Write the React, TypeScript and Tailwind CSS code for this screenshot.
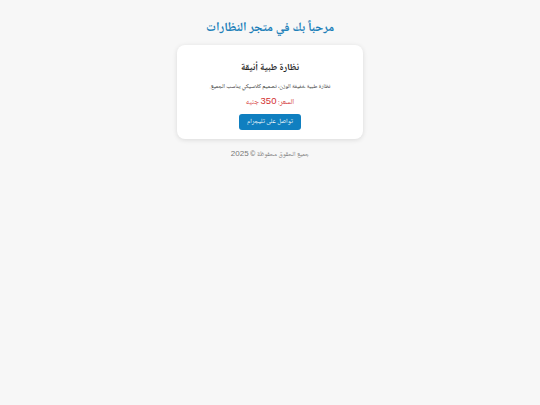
const latin = { fontFamily: '"Liberation Sans", Arial, sans-serif' };

export default function App() {
  return (
    <div
      dir="rtl"
      className="min-h-[405px] bg-[#f7f7f7] px-5 pt-[19px] text-center text-[#333]"
      style={{ fontFamily: '"Noto Naskh Arabic", "Liberation Sans", Arial, sans-serif' }}
    >
      <h1 className="text-[12.5px] font-bold leading-[20px] text-[#2180b9]">مرحباً بك في متجر النظارات</h1>

      <div className="mx-auto mt-[6px] w-[186px] rounded-lg bg-white px-3 pt-[15px] pb-[9px] shadow-[0_1px_5px_rgba(0,0,0,0.12)]">
        <h2 className="text-[9.5px] font-bold leading-[16px] text-[#222]">نظارة طبية أنيقة</h2>
        <p className="mt-[6px] text-[6px] leading-[10px] text-[#333]">
          نظارة طبية خفيفة الوزن، تصميم كلاسيكي يناسب الجميع.
        </p>
        <p className="mt-[3px] text-[7.5px] leading-[12px] text-[#d32f2f]">
          السعر: <span className="text-[9.5px]" style={latin}>350</span> جنيه
        </p>
        <div className="mt-[5px] flex justify-center">
          <a
            href="#"
            className="block w-[62px] rounded-[3px] bg-[#0f7fc0] py-[3px] text-[6.5px] leading-[10px] text-white"
          >
            تواصل على تليجرام
          </a>
        </div>
      </div>

      <footer className="mt-[9px] text-[6.5px] leading-[12px] text-[#777]">
        جميع الحقوق محفوظة ©{' '}
        <span className="text-[8px]" style={latin}>2025</span>
      </footer>
    </div>
  );
}
